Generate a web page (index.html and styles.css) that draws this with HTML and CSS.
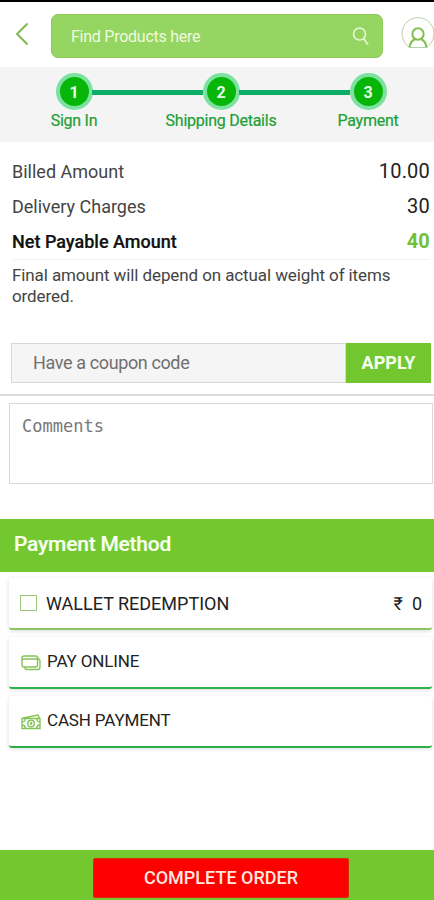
FILE: index.html
```html
<!DOCTYPE html>
<html lang="en">
<head>
<meta charset="utf-8">
<meta name="viewport" content="width=device-width">
<title>Payment</title>
<link rel="stylesheet" href="styles.css">
</head>
<body>
<header class="topbar">
  <svg class="back" width="14" height="24" viewBox="0 0 14 24"><path d="M12.500 1.500 2 12l10.500 10.500"/></svg>
  <div class="search">
    <span class="search-text">Find Products here</span>
    <svg class="lens" width="18" height="20" viewBox="0 0 18 20"><circle cx="7.500" cy="8" r="6"/><path d="m11.500 12.500 4.500 6"/></svg>
  </div>
  <svg class="user" width="33" height="36" viewBox="0 0 33 36"><path class="ring" d="M9 33.500A16 16 0 1 1 25 33.500Z"/><circle cx="17" cy="20" r="5.700"/><path d="M8.500 33.500c.5-4.500 2.500-7 5.500-8.200M25.500 33.500c-.5-4.500-2.500-7-5.500-8.200"/></svg>
</header>
<ol class="steps">
  <li class="step"><span class="dot">1</span><span class="step-label label-1">Sign In</span></li>
  <li class="step"><span class="dot">2</span><span class="step-label label-2">Shipping Details</span></li>
  <li class="step"><span class="dot">3</span><span class="step-label label-3">Payment</span></li>
</ol>
<main>
  <section class="summary">
    <div class="row"><span class="name">Billed Amount</span><span class="value">10.00</span></div>
    <div class="row"><span class="name delivery">Delivery Charges</span><span class="value">30</span></div>
    <div class="row net"><span class="name">Net Payable Amount</span><span class="value">40</span></div>
    <p class="note">Final amount will depend on actual weight of items<br>ordered.</p>
  </section>
  <section class="coupon">
    <div class="coupon-field">Have a coupon code</div>
    <div class="apply"><span>APPLY</span></div>
  </section>
  <section class="comments">Comments</section>
  <h2 class="heading"><span>Payment Method</span></h2>
  <section class="methods">
    <div class="method wallet">
      <span class="box"></span><span class="method-name">WALLET REDEMPTION</span><span class="balance">₹<span class="zero">0</span></span>
    </div>
    <div class="method">
      <svg class="icon" width="20" height="16" viewBox="0 0 20 16"><rect x="1" y="1" width="15.500" height="11" rx="2"/><path d="M1 4h15.500M3 12l2 2.500h11.500q2.500 0 2.500-2.500V5.500l-2.500-3"/></svg>
      <span class="method-name online">PAY ONLINE</span>
    </div>
    <div class="method">
      <svg class="icon" width="20" height="16" viewBox="0 0 20 16"><path d="M1 4.500h18v10H1zM2 4 17 1l1.500 3.500M1 8q3 0 3.500-3.500M15.500 4.500Q16 8 19 8M1 11q3 0 3.500 3.500M15.500 14.500q.5-3.500 3.500-3.500"/><circle cx="10" cy="9.500" r="3.300"/><circle cx="10" cy="9.500" r=".7"/></svg>
      <span class="method-name cash">CASH PAYMENT</span>
    </div>
  </section>
</main>
<footer class="footer"><div class="complete"><span>COMPLETE ORDER</span></div></footer>
</body>
</html>
```
FILE: styles.css
```css
* { box-sizing: border-box; }
body {
  margin: 0;
  height: 900px;
  display: flex;
  flex-direction: column;
  overflow: hidden;
  background: #fff;
  color: #444;
  font-family: Roboto, sans-serif;
}
svg { fill: none; flex: none; }
main { flex: 1; }

.topbar {
  height: 67px;
  border-top: 2px solid #000;
  padding: 12px 0 0 15px;
  display: flex;
  align-items: flex-start;
}
.back { margin-top: 8px; stroke: #79b64b; stroke-width: 1.8; }
.search {
  width: 332px;
  height: 44px;
  margin-left: 22px;
  padding: 0 12px 0 19px;
  border-radius: 7px;
  background: #95d562;
  border: 1px solid #8ccb59;
  display: flex;
  align-items: center;
  justify-content: space-between;
}
.search-text { color: #effadf; font-size: 16px; letter-spacing: -.25px; }
.lens { stroke: #e5f8d2; stroke-width: 1.7; }
.user { margin: 0 0 0 18px; stroke: #82bf53; stroke-width: 2; }
.user .ring { stroke: #b9cfaa; stroke-width: 1; }

.steps {
  height: 75px;
  margin: 0;
  padding: 6px 1px 0 9px;
  list-style: none;
  background: #f4f4f4;
  display: flex;
  gap: 17px;
}
.step {
  width: 130px;
  position: relative;
  display: flex;
  flex-direction: column;
  align-items: center;
}
.step + .step::before {
  content: "";
  position: absolute;
  top: 17px;
  left: -64px;
  width: 111px;
  height: 5px;
  background: #0bae66;
}
.dot {
  width: 37px;
  height: 37px;
  border: 4px solid #7de1a1;
  border-radius: 50%;
  background: #08b60a;
  color: #e7ffe5;
  font-size: 16px;
  font-weight: 700;
  line-height: 31px;
  text-align: center;
}
.step-label {
  margin-top: 1px;
  color: #229f35;
  font-size: 16px;
  letter-spacing: -.25px;
  line-height: 20px;
  white-space: nowrap;
  -webkit-text-stroke: .2px;
}

.summary { height: 201px; padding: 12px 4px 0 12px; }
.row {
  height: 35px;
  display: flex;
  align-items: center;
  justify-content: space-between;
}
.name { font-size: 18px; }
.value { color: #222; font-size: 20px; letter-spacing: .2px; }
.net { border-bottom: 1px solid #f2f2f2; height: 36px; }
.net .name { color: #111; font-weight: 500; -webkit-text-stroke: .2px; }
.net .value { color: #72c035; font-weight: 700; }
.row > span { margin-top: -1px; }
.note {
  margin: 5px 0 0;
  font-size: 17px;
  letter-spacing: -.1px;
  line-height: 21px;
  white-space: nowrap;
}

.coupon {
  height: 53px;
  padding: 0 3px 0 11px;
  border-bottom: 2px solid #dcdcdc;
  display: flex;
}
.coupon-field {
  width: 335px;
  height: 40px;
  padding-left: 21px;
  border: 1px solid #d8d8d8;
  background: #f5f5f5;
  color: #707070;
  font-size: 18px;
  letter-spacing: -.38px;
  line-height: 38px;
}
.apply {
  flex: 1;
  height: 40px;
  background: #72c72e;
  color: #f6ffee;
  font-size: 18px;
  font-weight: 700;
  line-height: 40px;
  text-align: center;
}
.comments {
  height: 81px;
  margin: 7px 1px 0 9px;
  padding: 10px 12px;
  border: 1px solid #d9d9d9;
  color: #777;
  font: 17px/24px "DejaVu Sans Mono", monospace;
}
.heading {
  height: 53px;
  margin: 35px 0 0;
  padding-left: 14px;
  background: #73c82f;
  color: #f8fff0;
  font-size: 21px;
  font-weight: 500;
  letter-spacing: -.22px;
  line-height: 50px;
  -webkit-text-stroke: .2px;
}
.methods {
  padding: 6px 2px 0 9px;
  display: flex;
  flex-direction: column;
  gap: 7px;
}
.method {
  height: 52px;
  padding: 0 10px 2px 12px;
  border-bottom: 2px solid #2bb04c;
  border-radius: 3px;
  background: #fff;
  box-shadow: 0 1px 4px #00000024;
  display: flex;
  align-items: center;
}
.wallet { border-bottom-color: #8cc65f; padding: 0 10px 0 11px; }
.box { width: 17px; height: 16px; border: 1px solid #9bc778; }
.icon { stroke: #84c456; stroke-width: 1.4; margin-top: 3px; }
.method-name { margin-left: 6px; color: #222; font-size: 17px; letter-spacing: -.15px; }
.wallet .method-name { margin-left: 9px; font-size: 18px; letter-spacing: 0; }
.balance { margin-left: auto; color: #222; font-size: 18px; }
.zero { margin-left: 9px; }

.footer {
  height: 50px;
  background: #73c82f;
  display: flex;
  justify-content: center;
  padding: 8px 0 0 8px;
}
.complete {
  width: 256px;
  height: 40px;
  border: 1px solid #d92a08;
  border-radius: 2px;
  background: #fe0000;
  color: #ffe6df;
  font-size: 18px;
  font-weight: 500;
  line-height: 38px;
  text-align: center;
}
```
